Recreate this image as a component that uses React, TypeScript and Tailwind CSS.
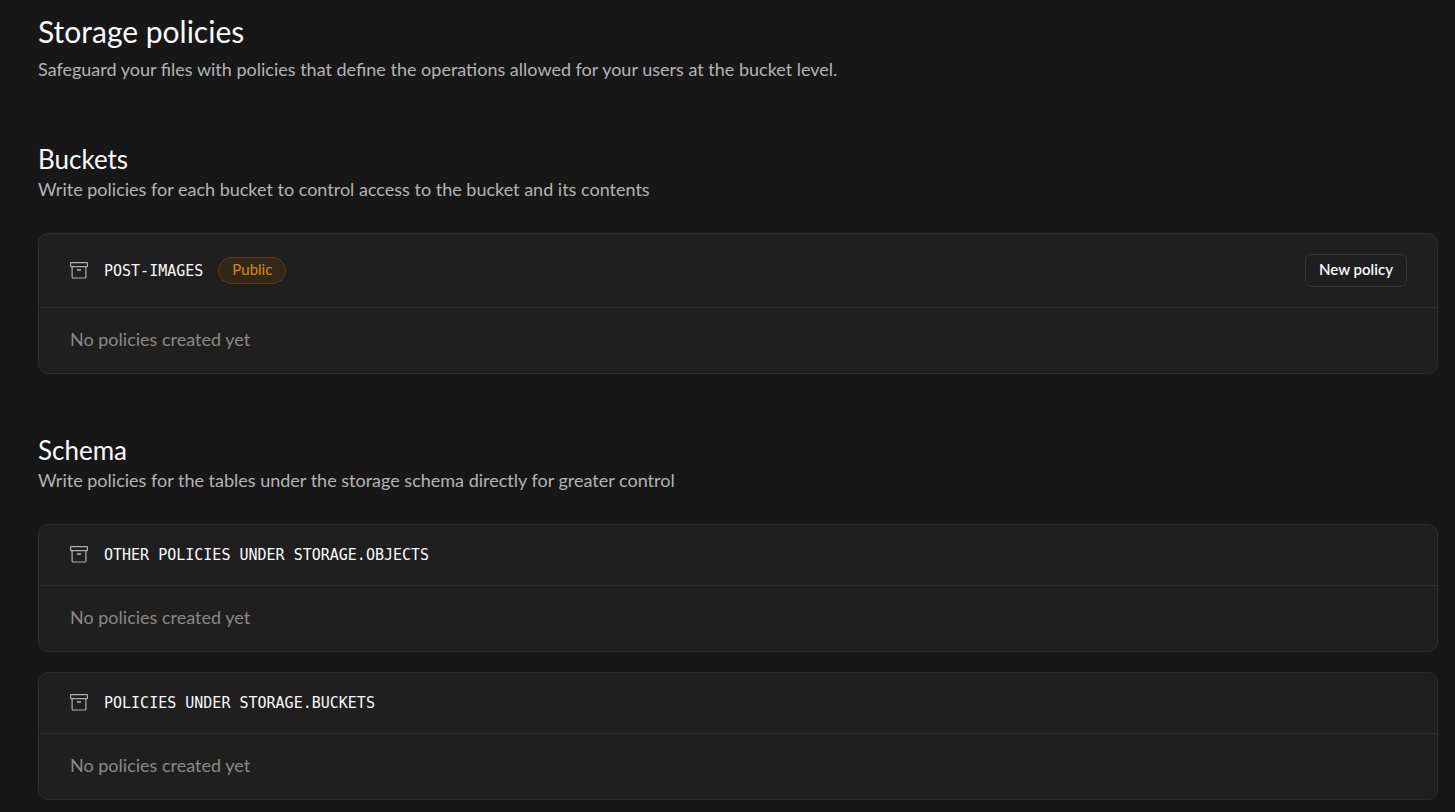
import type { ReactNode } from 'react';
import clsx from 'clsx';

type Policy = { name: string };

type PolicyTable = {
  title: string;
  isPublic?: boolean;
  canCreate?: boolean;
  policies: Policy[];
};

const BUCKETS: PolicyTable[] = [
  { title: 'post-images', isPublic: true, canCreate: true, policies: [] },
];

const SCHEMA_TABLES: PolicyTable[] = [
  { title: 'Other policies under storage.objects', policies: [] },
  { title: 'Policies under storage.buckets', policies: [] },
];

function ArchiveIcon() {
  return (
    <svg
      width="18"
      height="18"
      viewBox="0 0 18 18"
      fill="none"
      stroke="currentColor"
      strokeWidth="1.2"
      strokeLinejoin="round"
      className="shrink-0 text-[#b0b0b0]"
      aria-hidden="true"
    >
      <rect x="0.6" y="0.6" width="16.8" height="4" rx="0.4" />
      <path d="M2.1 4.6v10.4a1 1 0 0 0 1 1h11.8a1 1 0 0 0 1-1v-10.4" />
      <path d="M7 8h4" strokeWidth="1.6" />
    </svg>
  );
}

function PolicyCard({ table }: { table: PolicyTable }) {
  return (
    <div className="rounded-[10px] border border-[#2e2e2e] bg-[#1f1f1f]">
      <div
        className={clsx(
          'flex items-center justify-between border-b border-[#2e2e2e] pr-[30px] pl-[31px]',
          table.canCreate ? 'py-5' : 'py-[18px]'
        )}
      >
        <div className="flex items-center">
          <ArchiveIcon />
          <h3 className="ml-4 font-['DejaVu_Sans_Mono',monospace] text-[15px] leading-6 font-normal text-[#fafafa] uppercase">
            {table.title}
          </h3>
          {table.isPublic && (
            <span className="ml-[15px] rounded-full border border-[#633b0b] bg-[#33271a] px-[13px] pb-[3px] text-[15px] leading-[22px] text-[#db8a00]">
              Public
            </span>
          )}
        </div>
        {table.canCreate && (
          <button
            type="button"
            className="h-[33px] rounded-md border border-[#363636] px-[13px] pb-1 text-[15px] leading-5 font-semibold text-[#fafafa] hover:bg-[#2e2e2e]"
          >
            New policy
          </button>
        )}
      </div>
      {table.policies.length === 0 ? (
        <p className="px-[31px] pt-[19px] pb-[22px] text-[18px] leading-6 text-[#898989]">No policies created yet</p>
      ) : (
        <ul className="px-[31px] py-5 text-[18px] leading-6 text-[#fafafa]">
          {table.policies.map((policy) => (
            <li key={policy.name}>{policy.name}</li>
          ))}
        </ul>
      )}
    </div>
  );
}

function Section({ title, description, children }: { title: string; description: string; children: ReactNode }) {
  return (
    <section>
      <h2 className="text-[26px] leading-8 text-[#fafafa]">{title}</h2>
      <p className="text-[18px] leading-7 text-[#b4b4b4]">{description}</p>
      <div className="mt-[30px] flex flex-col gap-5">{children}</div>
    </section>
  );
}

export default function App() {
  return (
    <main className="min-h-screen bg-[#171717] pt-[11px] pr-[17px] pb-3 pl-[38px] font-['Lato','Liberation_Sans',sans-serif]">
      <header>
        <h1 className="text-[30px] leading-10 text-[#fafafa]">Storage policies</h1>
        <p className="mt-1 text-[18px] leading-7 text-[#b4b4b4]">
          Safeguard your files with policies that define the operations allowed for your users at the bucket level.
        </p>
      </header>

      <div className="mt-[60px] flex flex-col gap-15">
        <Section title="Buckets" description="Write policies for each bucket to control access to the bucket and its contents">
          {BUCKETS.map((table) => (
            <PolicyCard key={table.title} table={table} />
          ))}
        </Section>

        <Section title="Schema" description="Write policies for the tables under the storage schema directly for greater control">
          {SCHEMA_TABLES.map((table) => (
            <PolicyCard key={table.title} table={table} />
          ))}
        </Section>
      </div>
    </main>
  );
}
